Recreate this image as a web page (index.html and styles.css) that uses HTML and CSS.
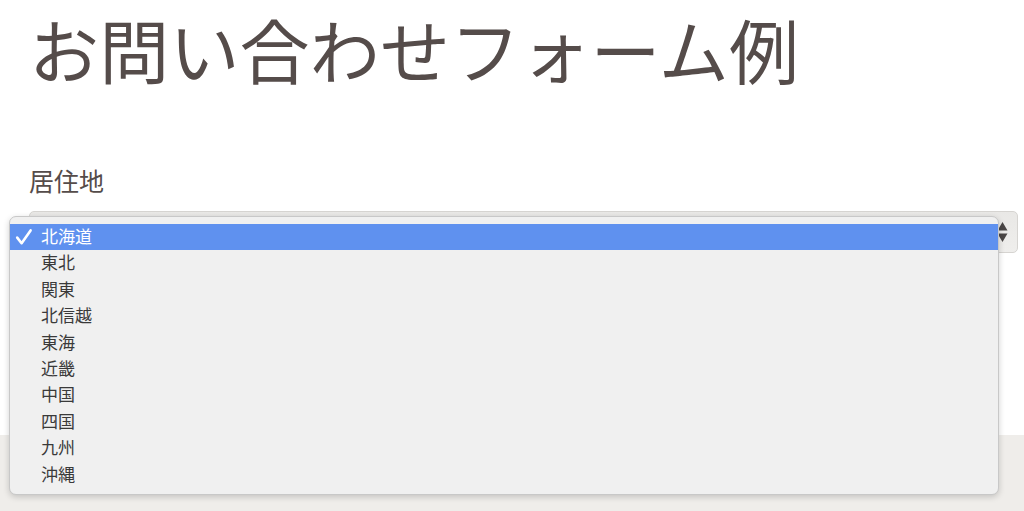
FILE: index.html
```html
<!DOCTYPE html>
<html lang="ja">
<head>
<meta charset="utf-8">
<title>お問い合わせフォーム例</title>
<link rel="stylesheet" href="styles.css">
</head>
<body>
<div class="page">
  <main class="content">
    <h1 class="title">お問い合わせフォーム例</h1>
    <div class="field">
      <label class="label">居住地</label>
      <div class="select">
        <span class="select-value">北海道</span>
        <svg class="arrows" width="11" height="22" viewBox="0 0 11 22">
          <path d="M5.5 1 L10.5 9.5 L0.5 9.5 Z" fill="#4a4646"/>
          <path d="M5.5 21 L10.5 12.5 L0.5 12.5 Z" fill="#4a4646"/>
        </svg>
      </div>
    </div>
  </main>
  <footer class="band"></footer>
</div>
<ul class="menu">
  <li class="item selected">
    <svg class="check" width="18" height="18" viewBox="0 0 18 18">
      <path d="M2.2 9.6 L6.6 15.2 L15.6 2.4" fill="none" stroke="#ffffff" stroke-width="2.6" stroke-linecap="round" stroke-linejoin="round"/>
    </svg>北海道</li>
  <li class="item">東北</li>
  <li class="item">関東</li>
  <li class="item">北信越</li>
  <li class="item">東海</li>
  <li class="item">近畿</li>
  <li class="item">中国</li>
  <li class="item">四国</li>
  <li class="item">九州</li>
  <li class="item">沖縄</li>
</ul>
</body>
</html>
```
FILE: styles.css
```css
html, body {
  margin: 0;
  padding: 0;
  height: 100%;
  background: #ffffff;
  font-family: "Noto Sans CJK JP", "Noto Sans", sans-serif;
}

.page {
  display: flex;
  flex-direction: column;
  min-height: 511px;
}

.content {
  height: 435px;
  box-sizing: border-box;
  padding: 7px 6px 0 29px;
  display: flex;
  flex-direction: column;
}

.title {
  margin: 0;
  font-size: 70px;
  line-height: 84px;
  font-weight: 400;
  color: #554c4a;
  letter-spacing: 0.2px;
}

.field {
  margin-top: 71px;
  display: flex;
  flex-direction: column;
  gap: 13px;
}

.label {
  font-size: 25px;
  line-height: 36px;
  color: #554c4a;
}

.select {
  height: 42px;
  box-sizing: border-box;
  border: 1px solid #d6d4d1;
  border-radius: 5px;
  background: linear-gradient(#e9e8e6, #efeeec);
  display: flex;
  align-items: center;
  justify-content: space-between;
  padding: 0 9px 0 12px;
  color: #333;
  font-size: 17px;
}

.select-value {
  visibility: hidden;
}

.band {
  flex: 1;
  background: #efedea;
}

.menu {
  position: absolute;
  top: 216px;
  left: 9px;
  width: 990px;
  height: 279px;
  box-sizing: border-box;
  margin: 0;
  padding: 7px 0 0 0;
  list-style: none;
  background: #f0f0f0;
  border: 1px solid #c8c8c8;
  border-radius: 7px;
  box-shadow: 0 2px 6px rgba(0, 0, 0, 0.18);
}

.item {
  position: relative;
  height: 26.4px;
  line-height: 24px;
  padding-left: 31px;
  font-size: 17px;
  color: #3a3a3a;
  box-sizing: border-box;
}

.item.selected {
  background: #5f91ef;
  color: #ffffff;
  height: 25.5px;
  line-height: 24px;
  margin-bottom: 0.9px;
}

.check {
  position: absolute;
  left: 5px;
  top: 4px;
}
```
